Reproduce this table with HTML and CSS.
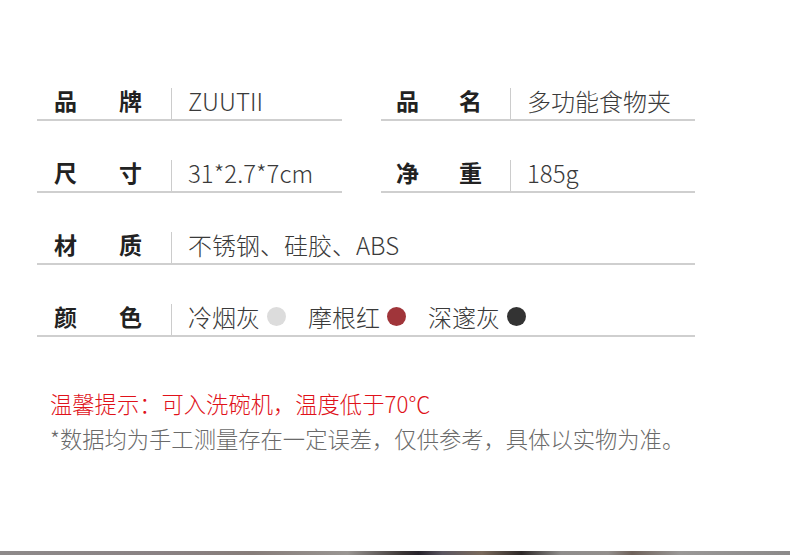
FILE: index.html
```html
<!DOCTYPE html>
<html lang="zh-CN">
<head>
<meta charset="utf-8">
<title>产品参数</title>
<link rel="stylesheet" href="styles.css">
</head>
<body>
<div class="page">
  <div class="specs">
    <div class="cell">
      <div class="label"><span>品</span><span>牌</span></div>
      <div class="value">ZUUTII</div>
    </div>
    <div class="cell cell-right">
      <div class="label"><span>品</span><span>名</span></div>
      <div class="value">多功能食物夹</div>
    </div>
    <div class="cell">
      <div class="label"><span>尺</span><span>寸</span></div>
      <div class="value">31*2.7*7cm</div>
    </div>
    <div class="cell cell-right">
      <div class="label"><span>净</span><span>重</span></div>
      <div class="value">185g</div>
    </div>
    <div class="cell cell-wide">
      <div class="label"><span>材</span><span>质</span></div>
      <div class="value">不锈钢、硅胶、ABS</div>
    </div>
    <div class="cell cell-wide">
      <div class="label"><span>颜</span><span>色</span></div>
      <div class="value colors">
        <span class="swatch">冷烟灰<i class="dot dot-light"></i></span>
        <span class="swatch">摩根红<i class="dot dot-red"></i></span>
        <span class="swatch">深邃灰<i class="dot dot-dark"></i></span>
      </div>
    </div>
  </div>
  <div class="notes">
    <p class="note-warn">温馨提示：可入洗碗机，温度低于70℃</p>
    <p class="note-info">*数据均为手工测量存在一定误差，仅供参考，具体以实物为准。</p>
  </div>
  <div class="strip"></div>
</div>
</body>
</html>
```

FILE: styles.css
```css
html, body {
  margin: 0;
  padding: 0;
  background: #fff;
}

.page {
  width: 790px;
  height: 555px;
  display: flex;
  flex-direction: column;
  font-family: "Noto Sans CJK SC", "Noto Sans", sans-serif;
  color: #333;
}

.specs {
  display: grid;
  grid-template-columns: 305px 314px;
  column-gap: 39px;
  row-gap: 39px;
  padding: 88px 0 0 37px;
}

.cell {
  display: flex;
  height: 33px;
  box-sizing: border-box;
  border-bottom: 2px solid #cfcfcf;
}

.cell-wide {
  grid-column: 1 / 3;
}

.label {
  width: 135px;
  box-sizing: border-box;
  padding: 0 29px 6px 17px;
  display: flex;
  align-items: center;
  justify-content: space-between;
  border-right: 1px solid #cccccc;
  font-size: 23px;
  font-weight: 700;
  color: #222;
  line-height: 1;
}

.cell-right .label {
  width: 130px;
  padding: 0 28px 6px 15px;
}

.value {
  display: flex;
  align-items: center;
  padding: 0 0 6px 16px;
  font-size: 24px;
  font-weight: 300;
  color: #3a3a3a;
  line-height: 1;
  white-space: nowrap;
}

.colors {
  gap: 22px;
}

.swatch {
  display: flex;
  align-items: center;
}

.dot {
  display: inline-block;
  width: 19px;
  height: 19px;
  border-radius: 50%;
  margin-left: 7px;
}

.dot-light { background: #dcdcdc; }
.dot-red { background: #a0353a; }
.dot-dark { background: #333333; }

.notes {
  padding: 49px 0 0 50px;
}

.notes p {
  margin: 0;
  font-size: 22.3px;
  line-height: 35px;
  font-weight: 300;
  white-space: nowrap;
}

.note-warn {
  color: #e0121a;
}

.note-info {
  color: #6a6a6a;
}

.strip {
  margin-top: auto;
  height: 4px;
  background: linear-gradient(90deg,
    #8e8a8a 0%, #8a8284 20%, #877d7a 32%, #9a9693 44%,
    #3a3434 51%, #26222a 53%, #5a5560 56%, #7a6a5c 61%,
    #2c2727 66%, #8f8d8c 71%, #938f8d 77%, #6e615a 80%,
    #9a9897 86%, #8c8a8a 100%);
}
```
